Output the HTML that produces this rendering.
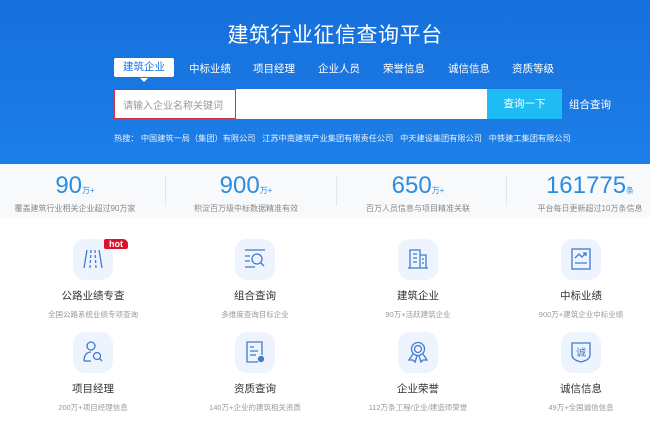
<!DOCTYPE html>
<html><head><meta charset="utf-8"><style>
*{margin:0;padding:0;box-sizing:border-box}
body{width:650px;height:423px;overflow:hidden;background:#fff;font-family:"Liberation Sans","Noto Sans CJK SC",sans-serif;position:relative}
.hd{position:absolute;left:0;top:0;width:650px;height:164px;background:linear-gradient(180deg,#1670dc 0%,#1a78e2 60%,#1d80e8 100%)}
.t{position:absolute;top:19px;left:10px;width:650px;text-align:center;color:#fff;font-size:21px;letter-spacing:0.5px}
.tab{position:absolute;top:61px;font-size:10.5px;color:#fff}
.act{position:absolute;left:114px;top:58px;width:60px;height:19px;background:#fff;border-radius:2px;color:#1a74e0;font-size:10.5px;text-align:center;line-height:19px}
.act:after{content:"";position:absolute;left:26px;bottom:-5px;border:4px solid transparent;border-top:4px solid #fff;border-bottom:0}
.inp{position:absolute;left:114px;top:89px;width:373px;height:30px;background:#fff}
.red{position:absolute;left:114px;top:89px;width:122px;height:30px;border:1.5px solid #d2333a}
.ph{position:absolute;left:123px;top:97px;font-size:10px;color:#999}
.btn{position:absolute;left:487px;top:89px;width:75px;height:30px;background:#1ebcf3;color:#fff;font-size:10.5px;text-align:center;line-height:30px}
.zh{position:absolute;left:569px;top:97px;color:#fff;font-size:10.5px}
.hot{position:absolute;left:114px;top:132px;color:#fff;font-size:8.2px;opacity:.9;white-space:nowrap}
.st{position:absolute;top:164px;left:0;width:650px;height:54px;background:#f8f9fb}
.c{position:absolute;top:0;width:160px;text-align:center}
.n{font-size:24px;color:#2b8de0;line-height:28px;margin-top:8px}
.n small{font-size:8px}
.s{font-size:8px;color:#888;margin-top:-2px}
.sep{position:absolute;top:12px;width:1px;height:30px;background:#e3e6ea}
.it{position:absolute;width:160px;text-align:center}
.ib{width:40px;height:41px;margin:0 auto;background:#edf4fd;border-radius:12px;position:relative}
.ib svg{position:absolute;left:8px;top:8px}
.it .a{font-size:10.5px;color:#333;margin-top:8px}
.it .b{font-size:7.5px;color:#999;margin-top:6px}
.hb{position:absolute;left:104px;top:239px;width:24px;height:10px;background:#e0102b;color:#fff;font-size:9px;line-height:10px;text-align:center;border-radius:2px 5px 2px 2px;font-weight:bold;z-index:2}
</style></head><body>
<div class="hd"></div>
<div class="t">建筑行业征信查询平台</div>
<div class="act">建筑企业</div>
<div class="tab" style="left:189px">中标业绩</div>
<div class="tab" style="left:253px">项目经理</div>
<div class="tab" style="left:318px">企业人员</div>
<div class="tab" style="left:383px">荣誉信息</div>
<div class="tab" style="left:448px">诚信信息</div>
<div class="tab" style="left:512px">资质等级</div>
<div class="inp"></div><div class="red"></div>
<div class="ph">请输入企业名称关键词</div>
<div class="btn">查询一下</div>
<div class="zh">组合查询</div>
<div class="hot">热搜： 中国建筑一局（集团）有限公司 &nbsp;&nbsp;江苏中南建筑产业集团有限责任公司 &nbsp;&nbsp;中天建设集团有限公司 &nbsp;&nbsp;中铁建工集团有限公司</div>
<div class="st">
<div class="c" style="left:-5px"><div class="n">90<small>万+</small></div><div class="s">覆盖建筑行业相关企业超过90万家</div></div>
<div class="sep" style="left:165px"></div>
<div class="c" style="left:166px"><div class="n">900<small>万+</small></div><div class="s">积淀百万级中标数据精准有效</div></div>
<div class="sep" style="left:336px"></div>
<div class="c" style="left:338px"><div class="n">650<small>万+</small></div><div class="s">百万人员信息与项目精准关联</div></div>
<div class="sep" style="left:506px"></div>
<div class="c" style="left:510px"><div class="n">161775<small>条</small></div><div class="s">平台每日更新超过10万条信息</div></div>
</div>
<div class="hb">hot</div>
<div class="it" style="left:13px;top:239px"><div class="ib"><svg width="24" height="24" fill="none" stroke="#3f7bd0" stroke-width="1.3"><path d="M6 3L3 21M18 3L21 21"/><path d="M10 3L9 21M14 3L15 21" stroke-dasharray="3 2"/></svg></div><div class="a">公路业绩专查</div><div class="b">全国公路系统业绩专项查询</div></div>
<div class="it" style="left:175px;top:239px"><div class="ib"><svg width="24" height="24" fill="none" stroke="#3f7bd0" stroke-width="1.3"><path d="M2 3H22M2 9H7M2 14H7M2 20H12"/><circle cx="14" cy="12" r="5"/><path d="M18 16L21 19"/></svg></div><div class="a">组合查询</div><div class="b">多维度查询目标企业</div></div>
<div class="it" style="left:338px;top:239px"><div class="ib"><svg width="24" height="24" fill="none" stroke="#3f7bd0" stroke-width="1.3"><path d="M4 21V3H14V21M14 8H20V21M2 21H22M7 7H11M7 11H11M7 15H11M16 12H18M16 16H18"/></svg></div><div class="a">建筑企业</div><div class="b">90万+活跃建筑企业</div></div>
<div class="it" style="left:501px;top:239px"><div class="ib"><svg width="24" height="24" fill="none" stroke="#3f7bd0" stroke-width="1.3"><rect x="3" y="2" width="18" height="20"/><path d="M6 11L10 7L13 10L17 6M14 6H17V9M6 16H18"/></svg></div><div class="a">中标业绩</div><div class="b">900万+建筑企业中标业绩</div></div>
<div class="it" style="left:13px;top:332px"><div class="ib"><svg width="24" height="24" fill="none" stroke="#3f7bd0" stroke-width="1.3"><circle cx="10" cy="6" r="4"/><path d="M3 21C3 15 6 12 10 12"/><path d="M3 21H10"/><circle cx="16" cy="16" r="3.5"/><path d="M18.5 18.5L21 21"/></svg></div><div class="a">项目经理</div><div class="b">200万+项目经理信息</div></div>
<div class="it" style="left:175px;top:332px"><div class="ib"><svg width="24" height="24" fill="none" stroke="#3f7bd0" stroke-width="1.3"><path d="M15 22H4V2H19V15"/><path d="M7 7H11M7 11H15M7 15H13"/><circle cx="18" cy="19" r="2.5" fill="#3f7bd0"/></svg></div><div class="a">资质查询</div><div class="b">140万+企业的建筑相关资质</div></div>
<div class="it" style="left:338px;top:332px"><div class="ib"><svg width="24" height="24" fill="none" stroke="#3f7bd0" stroke-width="1.3"><circle cx="12" cy="9" r="6.5"/><circle cx="12" cy="9" r="3.5"/><path d="M7 14L3 20H7L9 22L11 16M17 14L21 20H17L15 22L13 16"/></svg></div><div class="a">企业荣誉</div><div class="b">112万条工程/企业/建造师荣誉</div></div>
<div class="it" style="left:501px;top:332px"><div class="ib"><svg width="24" height="24" fill="none" stroke="#3f7bd0" stroke-width="1.3"><path d="M3 3H21V15C21 19 16 21 12 22C8 21 3 19 3 15Z"/><text x="12" y="16" font-size="10" fill="#3f7bd0" stroke="none" text-anchor="middle" font-family="Noto Sans CJK SC">诚</text></svg></div><div class="a">诚信信息</div><div class="b">49万+全国诚信信息</div></div>
</body></html>
